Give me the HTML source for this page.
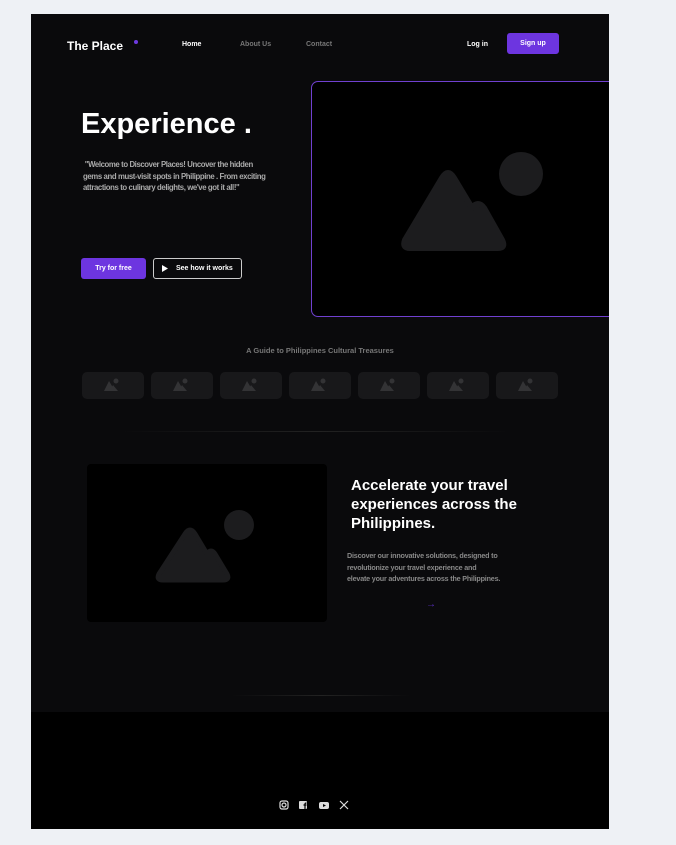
<!DOCTYPE html>
<html><head><meta charset="utf-8"><style>
*{margin:0;padding:0;box-sizing:border-box}
body{width:676px;height:845px;background:#eef1f5;font-family:"Liberation Sans",sans-serif;position:relative;overflow:hidden}
.p{position:absolute;left:31px;top:14px;width:578px;height:815px;background:#0a0a0c;overflow:hidden}
.a{position:absolute}
.nav{font-size:7px;font-weight:bold}
.thumb{position:absolute;top:358px;width:62px;height:27px;background:#18181a;border-radius:5px}
.thumb svg{position:absolute;left:22px;top:6px}
</style></head><body>
<div class="p">
<div class="a" style="left:36px;top:25px;font-size:12px;font-weight:bold;color:#fff">The Place</div>
<div class="a" style="left:103px;top:26px;width:4px;height:4px;border-radius:50%;background:#6d3ae0"></div>
<div class="a nav" style="left:151px;top:27px;color:#fff">Home</div>
<div class="a nav" style="left:209px;top:27px;color:#777">About Us</div>
<div class="a nav" style="left:275px;top:27px;color:#777">Contact</div>
<div class="a nav" style="left:436px;top:27px;color:#fff">Log in</div>
<div class="a nav" style="left:476px;top:19px;width:52px;height:21px;background:#6d35e0;border-radius:3px;color:#fff;text-align:center;line-height:21px">Sign up</div>
<div class="a" style="left:50px;top:94px;font-size:29px;font-weight:bold;color:#fff">Experience .</div>
<div class="a" style="left:52px;top:145px;font-size:7.8px;line-height:11.5px;color:#aaa;white-space:nowrap;font-weight:bold;letter-spacing:-0.4px">&nbsp;"Welcome to Discover Places! Uncover the hidden<br>gems and must-visit spots in Philippine . From exciting<br>attractions to culinary delights, we've got it all!"</div>
<div class="a nav" style="left:50px;top:244px;width:65px;height:21px;background:#6d35e0;border-radius:3px;color:#fff;text-align:center;line-height:21px">Try for free</div>
<div class="a nav" style="left:122px;top:244px;width:89px;height:21px;border:1px solid #ccc;border-radius:3px;color:#fff;line-height:19px;padding-left:22px">See how it works
<svg class="a" style="left:8px;top:6px" width="6" height="7"><path d="M0 0L6 3.5L0 7Z" fill="#fff"/></svg></div>
<div class="a" style="left:280px;top:67px;width:310px;height:236px;background:#000;border:1px solid #7040d0;border-radius:7px">
<svg class="a" style="left:86px;top:66px" width="150" height="110"><circle cx="123" cy="26" r="22" fill="#1c1c1e"/><path d="M44 30Q50 20 56 30L74 60Q80 52 86 60L104 92Q108 100 100 100H12Q4 100 7 92Z" fill="#1c1c1e" stroke="#1c1c1e" stroke-width="6" stroke-linejoin="round"/></svg></div>
<div class="a" style="left:0;width:578px;top:332px;text-align:center;font-size:7.5px;color:#777;font-weight:bold">A Guide to Philippines Cultural Treasures</div>
<div class="thumb" style="left:51px"><svg width="16" height="13"><circle cx="12" cy="3" r="2.5" fill="#333335"/><path d="M5 3L11 13H0Z M9 7L14 13H6Z" fill="#333335"/></svg></div>
<div class="thumb" style="left:120px"><svg width="16" height="13"><circle cx="12" cy="3" r="2.5" fill="#333335"/><path d="M5 3L11 13H0Z M9 7L14 13H6Z" fill="#333335"/></svg></div>
<div class="thumb" style="left:189px"><svg width="16" height="13"><circle cx="12" cy="3" r="2.5" fill="#333335"/><path d="M5 3L11 13H0Z M9 7L14 13H6Z" fill="#333335"/></svg></div>
<div class="thumb" style="left:258px"><svg width="16" height="13"><circle cx="12" cy="3" r="2.5" fill="#333335"/><path d="M5 3L11 13H0Z M9 7L14 13H6Z" fill="#333335"/></svg></div>
<div class="thumb" style="left:327px"><svg width="16" height="13"><circle cx="12" cy="3" r="2.5" fill="#333335"/><path d="M5 3L11 13H0Z M9 7L14 13H6Z" fill="#333335"/></svg></div>
<div class="thumb" style="left:396px"><svg width="16" height="13"><circle cx="12" cy="3" r="2.5" fill="#333335"/><path d="M5 3L11 13H0Z M9 7L14 13H6Z" fill="#333335"/></svg></div>
<div class="thumb" style="left:465px"><svg width="16" height="13"><circle cx="12" cy="3" r="2.5" fill="#333335"/><path d="M5 3L11 13H0Z M9 7L14 13H6Z" fill="#333335"/></svg></div>
<div class="a" style="left:90px;top:417px;width:390px;height:1px;background:linear-gradient(90deg,transparent,#222,transparent)"></div>
<div class="a" style="left:56px;top:450px;width:240px;height:158px;background:#000;border-radius:4px">
<svg class="a" style="left:68px;top:42px" width="110" height="80"><circle cx="84" cy="19" r="15" fill="#1c1c1e"/><path d="M30 28Q35 20 40 28L52 48Q56 42 60 48L72 68Q75 74 68 74H8Q1 74 4 68Z" fill="#1c1c1e" stroke="#1c1c1e" stroke-width="5" stroke-linejoin="round"/></svg></div>
<div class="a" style="left:320px;top:462px;font-size:15px;font-weight:bold;color:#fff;line-height:19px;width:205px">Accelerate your travel experiences across the Philippines.</div>
<div class="a" style="left:316px;top:536px;font-size:7.2px;line-height:11.7px;color:#888;white-space:nowrap;font-weight:bold;letter-spacing:-0.2px">Discover our innovative solutions, designed to<br>revolutionize your travel experience and<br>elevate your adventures across the Philippines.</div>
<div class="a" style="left:395px;top:585px;font-size:10px;color:#5a30c0">→</div>
<div class="a" style="left:200px;top:681px;width:180px;height:1px;background:linear-gradient(90deg,transparent,#222,transparent)"></div>
<div class="a" style="left:0;top:698px;width:578px;height:117px;background:#000"></div>
<svg class="a" style="left:248px;top:786px" width="75" height="10" fill="none" stroke="#ddd" stroke-width="1.2">
<rect x="1" y="1" width="8" height="8" rx="2"/><circle cx="5" cy="5" r="2"/>
<rect x="20" y="1" width="8" height="8" rx="1" fill="#ddd" stroke="none"/><path d="M26 9V5H27.5M24.5 5H27.5M26 9V4Q26 3 27.5 3" stroke="#000"/>
<rect x="40" y="2" width="10" height="7" rx="2" fill="#ddd" stroke="none"/><path d="M44 4L47 5.5L44 7Z" fill="#000" stroke="none"/>
<path d="M61 1L69 9M69 1L61 9"/>
</svg>
</div>
</body></html>
